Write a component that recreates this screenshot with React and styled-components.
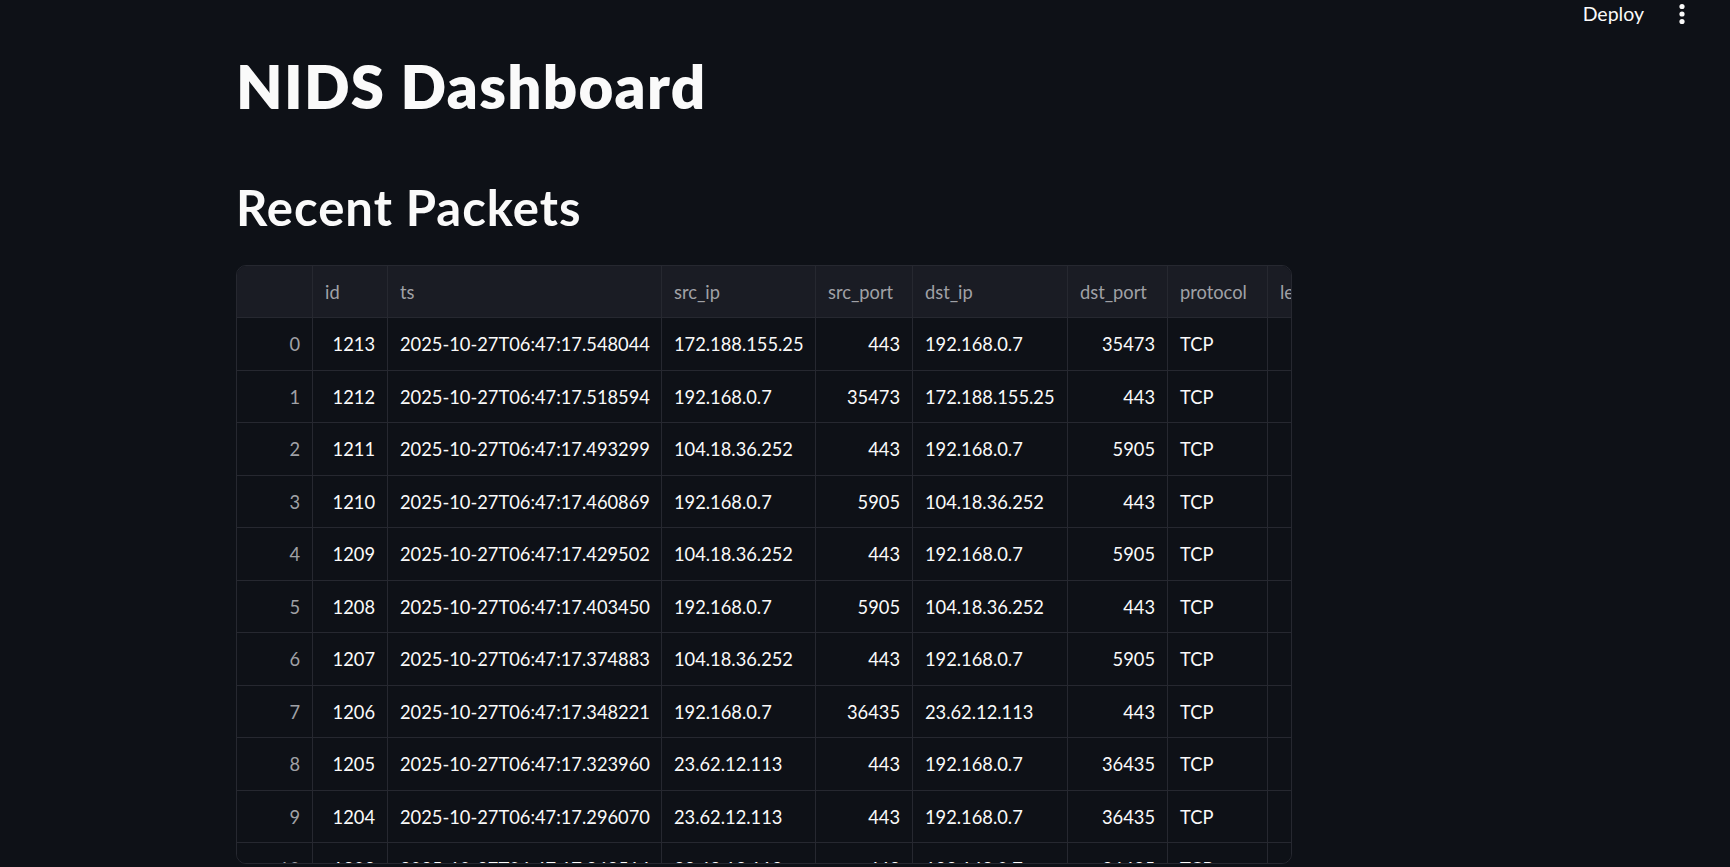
import React from "react";
import styled, { createGlobalStyle } from "styled-components";

const GlobalStyle = createGlobalStyle`
  html, body {
    margin: 0;
    padding: 0;
    background: #0e1117;
    color: #fafafa;
    font-family: Lato, "Noto Sans", sans-serif;
  }
  * { box-sizing: border-box; }
`;

const Page = styled.div`
  min-height: 867px;
  background: #0e1117;
  overflow: hidden;
`;

const TopBar = styled.header`
  display: flex;
  justify-content: flex-end;
  align-items: center;
  height: 28px;
  padding-right: 44px;
  gap: 34px;
`;

const DeployButton = styled.button`
  background: none;
  border: none;
  padding: 0;
  color: #fafafa;
  font-family: Lato, "Noto Sans", sans-serif;
  font-size: 19.5px;
  line-height: 28px;
  cursor: pointer;
`;

const MenuButton = styled.button`
  background: none;
  border: none;
  padding: 0;
  width: 8px;
  height: 28px;
  display: flex;
  align-items: center;
  justify-content: center;
  cursor: pointer;
`;

const Main = styled.main`
  padding-left: 236px;
  width: 1292px;
`;

const Title = styled.h1`
  margin: 22px 0 0;
  font-size: 60px;
  line-height: 1.2;
  font-weight: 800;
  color: #fafafa;
  letter-spacing: 1.3px;
`;

const Subtitle = styled.h2`
  margin: 56px 0 0;
  font-size: 49px;
  line-height: 1.2;
  font-weight: 700;
  color: #fafafa;
  letter-spacing: 1px;
`;

const Frame = styled.div`
  margin-top: 28px;
  width: 1056px;
  height: 599px;
  border: 1px solid #262830;
  border-radius: 10px;
  overflow: hidden;
`;

const COLS = "76px 75px 274px 154px 97px 155px 100px 100px 100px";

const Row = styled.div`
  display: grid;
  grid-template-columns: ${COLS};
  height: 52.5px;
  width: max-content;
  background: ${(p) => (p.$head ? "#1a1c24" : "#0e1117")};
  border-bottom: 1px solid #262830;
`;

const Cell = styled.div`
  display: flex;
  align-items: center;
  justify-content: ${(p) => (p.$right ? "flex-end" : "flex-start")};
  padding: 0 12px;
  border-right: 1px solid #262830;
  font-size: 18.3px;
  white-space: nowrap;
  overflow: hidden;
  color: ${(p) => (p.$muted ? "#a0a1a6" : "#fafafa")};
`;

const headers = ["", "id", "ts", "src_ip", "src_port", "dst_ip", "dst_port", "protocol", "length"];

const rows = [
  [1213, "2025-10-27T06:47:17.548044", "172.188.155.25", 443, "192.168.0.7", 35473, "TCP", 66],
  [1212, "2025-10-27T06:47:17.518594", "192.168.0.7", 35473, "172.188.155.25", 443, "TCP", 54],
  [1211, "2025-10-27T06:47:17.493299", "104.18.36.252", 443, "192.168.0.7", 5905, "TCP", 66],
  [1210, "2025-10-27T06:47:17.460869", "192.168.0.7", 5905, "104.18.36.252", 443, "TCP", 54],
  [1209, "2025-10-27T06:47:17.429502", "104.18.36.252", 443, "192.168.0.7", 5905, "TCP", 66],
  [1208, "2025-10-27T06:47:17.403450", "192.168.0.7", 5905, "104.18.36.252", 443, "TCP", 54],
  [1207, "2025-10-27T06:47:17.374883", "104.18.36.252", 443, "192.168.0.7", 5905, "TCP", 66],
  [1206, "2025-10-27T06:47:17.348221", "192.168.0.7", 36435, "23.62.12.113", 443, "TCP", 54],
  [1205, "2025-10-27T06:47:17.323960", "23.62.12.113", 443, "192.168.0.7", 36435, "TCP", 66],
  [1204, "2025-10-27T06:47:17.296070", "23.62.12.113", 443, "192.168.0.7", 36435, "TCP", 66],
  [1203, "2025-10-27T06:47:17.268514", "23.62.12.113", 443, "192.168.0.7", 36435, "TCP", 54],
];

const KebabIcon = () => (
  <svg width="8" height="28" viewBox="0 0 8 28">
    <circle cx="4" cy="6.5" r="2.6" fill="#fafafa" />
    <circle cx="4" cy="14" r="2.6" fill="#fafafa" />
    <circle cx="4" cy="21.5" r="2.6" fill="#fafafa" />
  </svg>
);

export default function App() {
  return (
    <Page>
      <GlobalStyle />
      <TopBar>
        <DeployButton>Deploy</DeployButton>
        <MenuButton aria-label="menu">
          <KebabIcon />
        </MenuButton>
      </TopBar>
      <Main>
        <Title>NIDS Dashboard</Title>
        <Subtitle>Recent Packets</Subtitle>
        <Frame>
          <Row $head>
            {headers.map((h, i) => (
              <Cell key={i} $muted>
                {h}
              </Cell>
            ))}
          </Row>
          {rows.map((r, i) => (
            <Row key={i}>
              <Cell $right $muted>
                {i}
              </Cell>
              {r.map((v, j) => (
                <Cell key={j} $right={typeof v === "number"}>
                  {v}
                </Cell>
              ))}
            </Row>
          ))}
        </Frame>
      </Main>
    </Page>
  );
}
